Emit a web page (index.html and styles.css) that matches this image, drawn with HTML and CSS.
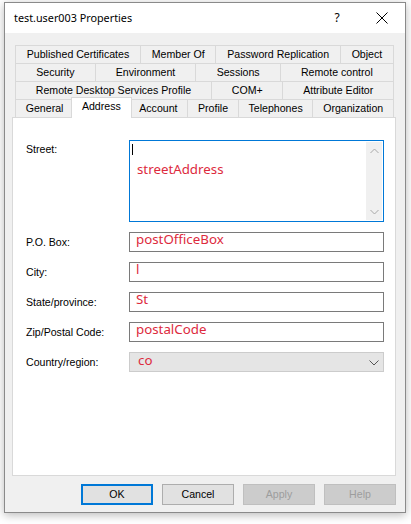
FILE: index.html
```html
<!DOCTYPE html>
<html>
<head>
<meta charset="utf-8">
<link rel="stylesheet" href="styles.css">
</head>
<body>
<div class="window">
  <div class="titlebar">
    <span class="title">test.user003 Properties</span>
    <span class="help">?</span>
    <svg class="close" width="12" height="12" viewBox="0 0 12 12"><path d="M0.5 0.5 L11.5 11.5 M11.5 0.5 L0.5 11.5" stroke="#000" stroke-width="1" fill="none"/></svg>
  </div>
  <div class="body">
    <div class="tabs">
      <div class="row">
        <div class="tab">Published Certificates</div>
        <div class="tab">Member Of</div>
        <div class="tab">Password Replication</div>
        <div class="tab">Object</div>
      </div>
      <div class="row">
        <div class="tab">Security</div>
        <div class="tab">Environment</div>
        <div class="tab">Sessions</div>
        <div class="tab">Remote control</div>
      </div>
      <div class="row">
        <div class="tab">Remote Desktop Services Profile</div>
        <div class="tab">COM+</div>
        <div class="tab">Attribute Editor</div>
      </div>
      <div class="row">
        <div class="tab">General</div>
        <div class="tab active">Address</div>
        <div class="tab">Account</div>
        <div class="tab">Profile</div>
        <div class="tab">Telephones</div>
        <div class="tab">Organization</div>
      </div>
    </div>
    <div class="panel">
      <div class="form">
        <div class="lbl lbl-top">Street:</div>
        <div class="textarea">
          <div class="ta-content">
            <div class="caret"></div>
            <div class="ta-text">streetAddress</div>
          </div>
          <div class="scrollbar">
            <svg width="9" height="6" viewBox="0 0 9 6"><polyline points="0.5,5 4.5,1 8.5,5" stroke="#a8a8a8" stroke-width="1" fill="none"/></svg>
            <svg width="9" height="6" viewBox="0 0 9 6"><polyline points="0.5,1 4.5,5 8.5,1" stroke="#a8a8a8" stroke-width="1" fill="none"/></svg>
          </div>
        </div>
        <div class="lbl">P.O. Box:</div>
        <div class="input">postOfficeBox</div>
        <div class="lbl">City:</div>
        <div class="input">l</div>
        <div class="lbl">State/province:</div>
        <div class="input">St</div>
        <div class="lbl">Zip/Postal Code:</div>
        <div class="input">postalCode</div>
        <div class="lbl">Country/region:</div>
        <div class="combo">
          <span class="combo-text">co</span>
          <svg width="10" height="6" viewBox="0 0 10 6"><polyline points="0.5,0.5 5,5 9.5,0.5" stroke="#555" stroke-width="1" fill="none"/></svg>
        </div>
      </div>
    </div>
    <div class="buttons">
      <div class="btn default">OK</div>
      <div class="btn">Cancel</div>
      <div class="btn disabled">Apply</div>
      <div class="btn disabled">Help</div>
    </div>
  </div>
</div>
</body>
</html>
```

FILE: styles.css
```css
html, body {
  margin: 0;
  padding: 0;
  background: #ffffff;
}
body {
  width: 411px;
  height: 524px;
  overflow: hidden;
  font-family: "Liberation Sans", Arial, sans-serif;
  font-size: 10.6px;
  color: #000;
}
.window {
  margin: 2px 0 0 4px;
  width: 400px;
  height: 509px;
  border: 1px solid #8a8a8a;
  background: #f0f0f0;
  box-shadow: 0 2px 9px rgba(0, 0, 0, 0.28);
  display: flex;
  flex-direction: column;
}
.titlebar {
  height: 30px;
  background: #ffffff;
  display: flex;
  align-items: center;
  padding: 0 17px 0 9px;
  flex: none;
}
.title {
  font-family: "Noto Sans", sans-serif;
  font-size: 10.8px;
  margin-top: -1px;
}
.help {
  margin-left: auto;
  width: 12px;
  text-align: center;
  font-family: "Noto Sans", sans-serif;
  font-size: 12px;
  margin-top: -1px;
}
.close {
  margin-left: 33px;
  display: block;
}
.body {
  flex: 1;
  display: flex;
  flex-direction: column;
  padding: 12px 9px 0 7px;
}
.tabs {
  margin: 0 2px 0 3px;
}
.row {
  display: flex;
  height: 18px;
}
.tab {
  flex: 1 1 auto;
  box-sizing: border-box;
  height: 18px;
  border: 1px solid #d9d9d9;
  border-bottom: 0;
  margin-left: -1px;
  padding: 0 6px;
  text-align: center;
  line-height: 17px;
  white-space: nowrap;
  background: #f0f0f0;
}
.tab:first-child {
  margin-left: 0;
}
.tab.active {
  position: relative;
  z-index: 1;
  background: #ffffff;
  height: 21px;
  margin: -2px -2px -1px -3px;
  line-height: 17px;
}
.panel {
  box-sizing: border-box;
  height: 359px;
  border: 1px solid #d9d9d9;
  background: #ffffff;
  padding: 22px 0 0 13px;
  flex: none;
}
.form {
  display: grid;
  grid-template-columns: 103px 255px;
  row-gap: 10px;
  align-items: center;
}
.lbl {
  line-height: 13px;
}
.lbl-top {
  align-self: start;
  padding-top: 3px;
}
.textarea {
  box-sizing: border-box;
  height: 82px;
  border: 1px solid #0078d7;
  display: flex;
}
.ta-content {
  flex: 1;
  padding: 2px 0 0 2px;
}
.caret {
  width: 1px;
  height: 11px;
  background: #000;
  margin-top: 1px;
}
.ta-text {
  font-family: "Noto Sans", sans-serif;
  font-size: 13.3px;
  color: #dd2a3d;
  line-height: 12px;
  margin: 8px 0 0 5px;
  padding-top: 0;
}
.scrollbar {
  width: 16px;
  margin: 1px 1px 1px 0;
  background: #f0f0f0;
  display: flex;
  flex-direction: column;
  justify-content: space-between;
  align-items: center;
  padding: 6px 0 5px;
}
.scrollbar svg {
  display: block;
}
.input {
  box-sizing: border-box;
  height: 20px;
  border: 1px solid #7a7a7a;
  background: #fff;
  padding: 0 0 0 6px;
  font-family: "Noto Sans", sans-serif;
  font-size: 13.3px;
  line-height: 12px;
  color: #dd2a3d;
}
.combo {
  box-sizing: border-box;
  height: 20px;
  border: 1px solid #cccccc;
  background: #e5e5e5;
  display: flex;
  align-items: flex-start;
  padding: 0 4px 0 8px;
  font-family: "Noto Sans", sans-serif;
  font-size: 13.3px;
  line-height: 15px;
  color: #dd2a3d;
}
.combo-text {
  flex: 1;
}
.combo svg {
  display: block;
  margin-top: 7px;
}
.buttons {
  display: flex;
  justify-content: flex-end;
  gap: 9px;
  margin-top: 8px;
}
.btn {
  box-sizing: border-box;
  width: 72px;
  height: 21px;
  border: 1px solid #adadad;
  background: #e1e1e1;
  text-align: center;
  line-height: 19px;
}
.btn.default {
  border: 2px solid #0078d7;
  line-height: 17px;
}
.btn.disabled {
  background: #cccccc;
  border-color: #bfbfbf;
  color: #9d9d9d;
}
```
